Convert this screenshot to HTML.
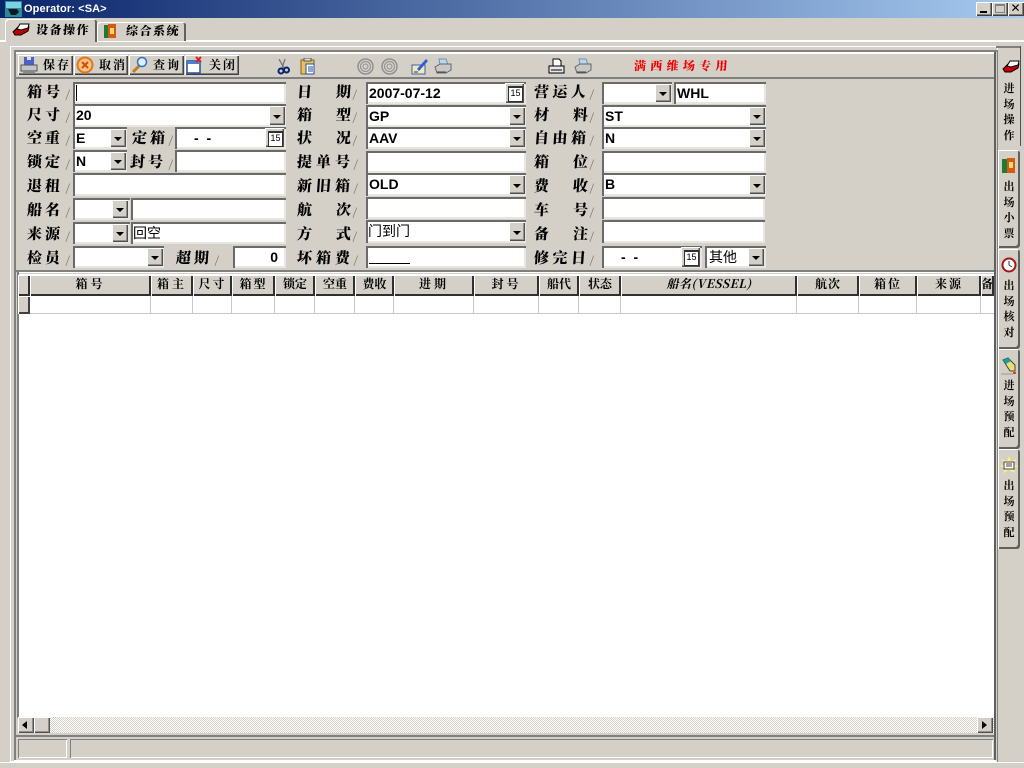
<!DOCTYPE html>
<html><head><meta charset="utf-8"><style>
html,body{margin:0;padding:0;width:1024px;height:768px;overflow:hidden;background:#d4d0c8}
div,span,svg{position:absolute;box-sizing:border-box}
body{font-family:"Liberation Sans","Noto Sans CJK SC",sans-serif;color:#000}
.f{background:#fff;box-shadow:inset 2px 2px 0 #6a6a6a,inset -2px -2px 0 #e8e6e0;font-weight:bold;font-size:14px;line-height:21px;padding:1px 0 0 3px;white-space:nowrap}
.a{width:16px;background:#d4d0c8;box-shadow:inset 1px 1px 0 #fff,inset -1px -1px 0 #505050,inset -2px -2px 0 #909090}
.a:after{content:"";position:absolute;left:4px;top:50%;margin-top:-1px;border:4px solid transparent;border-top:4px solid #000;border-bottom:0}
.c{width:19px;background:#d4d0c8;box-shadow:inset 1px 1px 0 #fff,inset -1px -1px 0 #505050,inset -2px -2px 0 #909090}
.c:after{content:"15";position:absolute;left:3px;top:3px;width:13px;height:13px;border:1px solid #303030;border-top:2px solid #303030;background:#fff;font:9px/10px "Liberation Sans",sans-serif;text-align:center}
.l{font-family:"Noto Serif CJK SC",serif;font-size:15px;line-height:20px;white-space:nowrap;font-weight:900;transform:skewX(-4deg)}
.s{font-size:11px;color:#555;line-height:12px;font-weight:normal}
.h{top:275px;height:21px;background:#d4d0c8;box-shadow:inset 1px 1px 0 #fff,inset -2px -2px 0 #303030;font-family:"Noto Serif CJK SC",serif;font-size:12px;font-weight:700;line-height:18px;text-align:center;white-space:nowrap;overflow:hidden}
.v{top:296px;width:1px;height:18px;background:#c8c8c8}
.b{top:55px;height:20px;background:#d4d0c8;box-shadow:inset 1px 1px 0 #fff,inset -1px -1px 0 #404040,inset -2px -2px 0 #808080;font-family:"Noto Serif CJK SC",serif;font-size:12px;font-weight:700;line-height:19px;white-space:nowrap}
.t{left:998px;width:22px;background:#d4d0c8;box-shadow:inset 1px 1px 0 #fff,inset -2px -2px 0 #606060;border-radius:0 3px 3px 0;font-family:"Noto Serif CJK SC",serif;font-size:11px;font-weight:700;line-height:15.500px;text-align:center}
.w{top:2px;width:16px;height:14px;background:#d4d0c8;box-shadow:inset 1px 1px 0 #fff,inset -1px -1px 0 #404040,inset -2px -2px 0 #808080}
</style></head><body>

<!-- title bar -->
<div style="left:0;top:0;width:1024px;height:18px;background:linear-gradient(90deg,#0a246a 0%,#a6caf0 100%)"></div>
<svg style="left:5px;top:1px" width="17" height="16" viewBox="0 0 17 16"><rect width="17" height="16" fill="#2a8a96"/><rect x="1" y="1" width="15" height="6" fill="#7fd0e0"/><path d="M3 8h9l2 3-3 3H6z" fill="#101820"/></svg>
<div style="left:24px;top:2px;color:#fff;font-size:11px;line-height:14px;font-weight:bold;letter-spacing:.1px">Operator: &lt;SA&gt;</div>
<div class="w" style="left:976px"><span style="left:4px;top:9px;width:7px;height:2px;background:#000"></span></div>
<div class="w" style="left:992px"><span style="left:3px;top:2px;width:10px;height:9px;border:1px solid #808080;border-top:2px solid #808080"></span></div>
<div class="w" style="left:1008px;font-size:12px;line-height:13px;text-align:center;padding-right:1px">✕</div>

<!-- top tabs -->
<div style="left:0;top:40px;width:1024px;height:2px;background:#fff"></div>
<div style="left:5px;top:19px;width:92px;height:23px;background:#d4d0c8;box-shadow:inset 1px 1px 0 #fff,inset -2px 0 0 #606060;border-radius:3px 3px 0 0"></div>
<div style="left:97px;top:22px;width:89px;height:19px;background:#d4d0c8;box-shadow:inset 1px 1px 0 #fff,inset -2px 0 0 #606060;border-radius:3px 3px 0 0"></div>
<svg style="left:12px;top:22px" width="18" height="15" viewBox="0 0 18 15"><path d="M1 10 6 5h11l-1 4-7 4H3z" fill="#c00000" stroke="#000"/><path d="M5 7 8 2h9l-1 4-7 2z" fill="#fff" stroke="#000"/></svg>
<div class="l" style="left:36px;top:20px;font-size:12px;letter-spacing:1.500px">设备操作</div>
<svg style="left:103px;top:23px" width="14" height="16" viewBox="0 0 14 16"><rect x="1" y="2" width="5" height="13" fill="#1f7a35"/><rect x="5" y="1" width="8" height="14" fill="#d85a10"/><rect x="7" y="5" width="4" height="6" fill="#ffd870"/></svg>
<div class="l" style="left:126px;top:21px;font-size:12px;letter-spacing:1.500px">综合系统</div>

<!-- main frame -->
<div style="left:10px;top:46px;width:988px;height:716px;box-shadow:inset 1px 1px 0 #fff,inset -1px -1px 0 #fff"></div>
<div style="left:14px;top:50px;width:2px;height:712px;background:#808080"></div>
<div style="left:14px;top:50px;width:984px;height:2px;background:#808080"></div>
<div style="left:16px;top:52px;width:980px;height:2px;background:#fff"></div>
<div style="left:994px;top:52px;width:2px;height:710px;background:#606060"></div>
<div style="left:14px;top:760px;width:982px;height:2px;background:#fff"></div>
<div style="left:16px;top:77px;width:978px;height:2px;background:#808080"></div>
<div style="left:0;top:762px;width:1024px;height:1px;background:#fff"></div>

<!-- toolbar -->
<div class="b" style="left:18px;width:55px"><span style="left:25px;letter-spacing:2px">保存</span></div>
<div class="b" style="left:74px;width:54px"><span style="left:25px;letter-spacing:2px">取消</span></div>
<div class="b" style="left:129px;width:55px"><span style="left:24px;letter-spacing:2px">查询</span></div>
<div class="b" style="left:185px;width:54px"><span style="left:24px;letter-spacing:2px">关闭</span></div>
<svg style="left:20px;top:56px" width="18" height="18" viewBox="0 0 18 18"><rect x="4" y="1" width="10" height="9" fill="#4a62c8"/><rect x="7" y="1" width="4" height="3" fill="#dde"/><path d="M1 9h16v6H1z" fill="#c0c4cc" stroke="#555"/><rect x="3" y="14" width="12" height="3" fill="#888"/></svg>
<svg style="left:76px;top:56px" width="18" height="18" viewBox="0 0 18 18"><circle cx="9" cy="9" r="7.500" fill="#f6c08a" stroke="#e07818" stroke-width="2"/><path d="M6 6l6 6M12 6l-6 6" stroke="#d05000" stroke-width="2"/></svg>
<svg style="left:131px;top:56px" width="18" height="18" viewBox="0 0 18 18"><path d="M2 16 8 10" stroke="#c87820" stroke-width="3"/><circle cx="11" cy="6" r="4.500" fill="#d8f0ff" stroke="#3070c0" stroke-width="1.500"/></svg>
<svg style="left:186px;top:56px" width="18" height="18" viewBox="0 0 18 18"><rect x="1" y="5" width="13" height="12" fill="#fff" stroke="#2050a0" stroke-width="1.500"/><rect x="1" y="5" width="13" height="3" fill="#4a80d0"/><path d="M10 1l5 5M15 1l-5 5" stroke="#e02020" stroke-width="2"/></svg>
<svg style="left:276px;top:59px" width="14" height="16" viewBox="0 0 14 16"><path d="M3 0l5 9M9 0 6 9" stroke="#777" stroke-width="1.300"/><circle cx="5" cy="12" r="2.500" fill="none" stroke="#0a246a" stroke-width="2"/><circle cx="10.500" cy="11" r="2.500" fill="none" stroke="#0a246a" stroke-width="2"/></svg>
<svg style="left:300px;top:58px" width="16" height="17" viewBox="0 0 16 17"><rect x="1" y="2" width="13" height="14" fill="#e8c060" stroke="#806020"/><rect x="4" y="0" width="7" height="3" fill="#ddd" stroke="#555"/><rect x="6" y="6" width="8" height="10" fill="#fff" stroke="#2050a0"/><path d="M8 9h5M8 11h5M8 13h5" stroke="#2050a0"/></svg>
<svg style="left:357px;top:58px" width="17" height="17" viewBox="0 0 17 17" fill="none" stroke="#909090"><circle cx="8.500" cy="8.500" r="7.500" stroke-width="1.500"/><circle cx="8.500" cy="8.500" r="5"/><circle cx="8.500" cy="8.500" r="2.500"/></svg>
<svg style="left:381px;top:58px" width="17" height="17" viewBox="0 0 17 17" fill="none" stroke="#909090"><circle cx="8.500" cy="8.500" r="7.500" stroke-width="1.500"/><circle cx="8.500" cy="8.500" r="5"/><circle cx="8.500" cy="8.500" r="2.500"/></svg>
<svg style="left:411px;top:57px" width="18" height="18" viewBox="0 0 18 18"><path d="M1 8h13v9H1z" fill="#f0e8c0" stroke="#4060a0"/><path d="M6 12 15 2l2 2-9 10z" fill="#2a60d0"/><path d="M3 15h4" stroke="#333"/></svg>
<svg style="left:434px;top:58px" width="18" height="17" viewBox="0 0 18 17"><path d="M5 1h7l2 6H6z" fill="#b8d8f0" stroke="#7090b0"/><path d="M1 9l5-3h11v6l-5 3H3z" fill="#c8c8c8" stroke="#666"/><path d="M3 14h9" stroke="#444"/></svg>
<svg style="left:548px;top:58px" width="17" height="16" viewBox="0 0 17 16"><path d="M5 1h6l2 2v5H5z" fill="#fff" stroke="#000"/><path d="M1 8h15v7H1z" fill="#e8e8e8" stroke="#000"/><path d="M3 12h11" stroke="#000"/></svg>
<svg style="left:574px;top:58px" width="18" height="17" viewBox="0 0 18 17"><path d="M5 1h7l2 6H6z" fill="#b8d8f0" stroke="#7090b0"/><path d="M1 9l5-3h11v6l-5 3H3z" fill="#c8c8c8" stroke="#666"/><path d="M3 14h9" stroke="#444"/></svg>
<div class="l" style="left:634px;top:56px;font-size:12px;letter-spacing:4.300px;color:#f00000">满西维场专用</div>

<!-- column 1 -->
<div class="l" style="left:27px;top:82px;letter-spacing:3px">箱号<span class="s" style="left:39px;top:6px">/</span></div>
<div class="f" style="left:73px;top:82px;width:213px;height:22px"><span style="left:3px;top:3px;width:1px;height:16px;background:#000"></span></div>
<div class="l" style="left:27px;top:105px;letter-spacing:3px">尺寸<span class="s" style="left:39px;top:6px">/</span></div>
<div class="f" style="left:73px;top:104px;width:213px;height:23px">20<div class="a" style="left:196px;top:2px;height:19px"></div></div>
<div class="l" style="left:27px;top:128px;letter-spacing:3px">空重<span class="s" style="left:39px;top:6px">/</span></div>
<div class="f" style="left:73px;top:127px;width:54px;height:22px">E<div class="a" style="left:37px;top:2px;height:18px"></div></div>
<div class="l" style="left:132px;top:128px;letter-spacing:3px">定箱<span class="s" style="left:37px;top:6px">/</span></div>
<div class="f" style="left:175px;top:127px;width:111px;height:22px;padding-left:19px">- &nbsp;-<div class="c" style="left:90px;top:1px;height:19px"></div></div>
<div class="l" style="left:27px;top:152px;letter-spacing:3px">锁定<span class="s" style="left:39px;top:6px">/</span></div>
<div class="f" style="left:73px;top:150px;width:54px;height:22px">N<div class="a" style="left:37px;top:2px;height:18px"></div></div>
<div class="l" style="left:130px;top:152px;letter-spacing:3px">封号<span class="s" style="left:39px;top:6px">/</span></div>
<div class="f" style="left:175px;top:150px;width:111px;height:22px"></div>
<div class="l" style="left:27px;top:176px;letter-spacing:3px">退租<span class="s" style="left:39px;top:6px">/</span></div>
<div class="f" style="left:73px;top:173px;width:213px;height:23px"></div>
<div class="l" style="left:27px;top:200px;letter-spacing:3px">船名<span class="s" style="left:39px;top:6px">/</span></div>
<div class="f" style="left:73px;top:198px;width:57px;height:22px"><div class="a" style="left:39px;top:2px;height:18px"></div></div>
<div class="f" style="left:131px;top:198px;width:155px;height:22px"></div>
<div class="l" style="left:27px;top:224px;letter-spacing:3px">来源<span class="s" style="left:39px;top:6px">/</span></div>
<div class="f" style="left:73px;top:222px;width:57px;height:22px"><div class="a" style="left:39px;top:2px;height:18px"></div></div>
<div class="f" style="left:131px;top:222px;width:155px;height:22px;font-weight:normal;font-size:14px;padding-left:2px">回空</div>
<div class="l" style="left:27px;top:248px;letter-spacing:3px">检员<span class="s" style="left:39px;top:6px">/</span></div>
<div class="f" style="left:73px;top:246px;width:91px;height:22px"><div class="a" style="left:74px;top:2px;height:18px"></div></div>
<div class="l" style="left:176px;top:248px;letter-spacing:3px">超期<span class="s" style="left:39px;top:6px">/</span></div>
<div class="f" style="left:233px;top:246px;width:53px;height:22px;text-align:right;padding-right:8px">0</div>

<!-- column 2 -->
<div class="l" style="left:297px;top:82px">日<span style="left:39px;top:0">期</span><span class="s" style="left:56px;top:6px">/</span></div>
<div class="f" style="left:366px;top:82px;width:160px;height:22px">2007-07-12<div class="c" style="left:139px;top:1px;height:20px"></div></div>
<div class="l" style="left:297px;top:105px">箱<span style="left:39px;top:0">型</span><span class="s" style="left:56px;top:6px">/</span></div>
<div class="f" style="left:366px;top:105px;width:160px;height:22px">GP<div class="a" style="left:143px;top:2px;height:18px"></div></div>
<div class="l" style="left:297px;top:128px">状<span style="left:39px;top:0">况</span><span class="s" style="left:56px;top:6px">/</span></div>
<div class="f" style="left:366px;top:127px;width:160px;height:22px">AAV<div class="a" style="left:143px;top:2px;height:18px"></div></div>
<div class="l" style="left:297px;top:152px;letter-spacing:4px">提单号<span class="s" style="left:57px;top:6px">/</span></div>
<div class="f" style="left:366px;top:151px;width:160px;height:22px"></div>
<div class="l" style="left:297px;top:176px;letter-spacing:4px">新旧箱<span class="s" style="left:57px;top:6px">/</span></div>
<div class="f" style="left:366px;top:173px;width:160px;height:23px">OLD<div class="a" style="left:143px;top:2px;height:19px"></div></div>
<div class="l" style="left:297px;top:200px">航<span style="left:39px;top:0">次</span><span class="s" style="left:56px;top:6px">/</span></div>
<div class="f" style="left:366px;top:197px;width:160px;height:22px"></div>
<div class="l" style="left:297px;top:224px">方<span style="left:39px;top:0">式</span><span class="s" style="left:56px;top:6px">/</span></div>
<div class="f" style="left:366px;top:220px;width:160px;height:23px;font-weight:normal;font-size:14px;padding-left:2px">门到门<div class="a" style="left:143px;top:2px;height:19px"></div></div>
<div class="l" style="left:297px;top:248px;letter-spacing:4px">坏箱费<span class="s" style="left:57px;top:6px">/</span></div>
<div class="f" style="left:366px;top:246px;width:160px;height:22px"><span style="left:3px;top:17px;width:41px;height:1px;background:#000"></span></div>

<!-- column 3 -->
<div class="l" style="left:534px;top:82px;letter-spacing:3.500px">营运人<span class="s" style="left:56px;top:6px">/</span></div>
<div class="f" style="left:602px;top:82px;width:70px;height:22px"><div class="a" style="left:53px;top:2px;height:18px"></div></div>
<div class="f" style="left:674px;top:82px;width:92px;height:22px">WHL</div>
<div class="l" style="left:534px;top:105px">材<span style="left:39px;top:0">料</span><span class="s" style="left:56px;top:6px">/</span></div>
<div class="f" style="left:602px;top:105px;width:164px;height:22px">ST<div class="a" style="left:147px;top:2px;height:18px"></div></div>
<div class="l" style="left:534px;top:128px;letter-spacing:3.500px">自由箱<span class="s" style="left:56px;top:6px">/</span></div>
<div class="f" style="left:602px;top:127px;width:164px;height:22px">N<div class="a" style="left:147px;top:2px;height:18px"></div></div>
<div class="l" style="left:534px;top:152px">箱<span style="left:39px;top:0">位</span><span class="s" style="left:56px;top:6px">/</span></div>
<div class="f" style="left:602px;top:151px;width:164px;height:22px"></div>
<div class="l" style="left:534px;top:176px">费<span style="left:39px;top:0">收</span><span class="s" style="left:56px;top:6px">/</span></div>
<div class="f" style="left:602px;top:173px;width:164px;height:23px">B<div class="a" style="left:147px;top:2px;height:19px"></div></div>
<div class="l" style="left:534px;top:200px">车<span style="left:39px;top:0">号</span><span class="s" style="left:56px;top:6px">/</span></div>
<div class="f" style="left:602px;top:197px;width:163px;height:22px"></div>
<div class="l" style="left:534px;top:224px">备<span style="left:39px;top:0">注</span><span class="s" style="left:56px;top:6px">/</span></div>
<div class="f" style="left:602px;top:220px;width:163px;height:23px"></div>
<div class="l" style="left:534px;top:248px;letter-spacing:3.500px">修完日<span class="s" style="left:56px;top:6px">/</span></div>
<div class="f" style="left:602px;top:246px;width:100px;height:22px;padding-left:19px">- &nbsp;-<div class="c" style="left:79px;top:1px;height:20px"></div></div>
<div class="f" style="left:705px;top:246px;width:61px;height:22px;font-weight:normal;font-size:14px;padding-left:4px">其他<div class="a" style="left:43px;top:2px;height:18px"></div></div>

<!-- table -->
<div style="left:16px;top:270px;width:978px;height:2px;background:#808080"></div>
<div style="left:17px;top:274px;width:977px;height:443px;background:#fff"></div>
<div style="left:17px;top:272px;width:2px;height:446px;background:#808080"></div>
<div style="left:19px;top:272px;width:975px;height:2px;background:#d4d0c8;border-top:1px solid #fff"></div>
<div class="h" style="left:18px;width:12px"></div>
<div class="h" style="left:30px;width:121px;letter-spacing:3px">箱号</div>
<div class="h" style="left:151px;width:42px;letter-spacing:3px">箱主</div>
<div class="h" style="left:193px;width:39px;letter-spacing:2px">尺寸</div>
<div class="h" style="left:232px;width:43px;letter-spacing:2px">箱型</div>
<div class="h" style="left:275px;width:40px">锁定</div>
<div class="h" style="left:315px;width:40px">空重</div>
<div class="h" style="left:355px;width:39px">费收</div>
<div class="h" style="left:394px;width:80px;letter-spacing:3px">进期</div>
<div class="h" style="left:474px;width:65px;letter-spacing:3px">封号</div>
<div class="h" style="left:539px;width:40px">船代</div>
<div class="h" style="left:579px;width:42px">状态</div>
<div class="h" style="left:621px;width:176px;letter-spacing:.5px"><i>船名(VESSEL)</i></div>
<div class="h" style="left:797px;width:62px;letter-spacing:1px">航次</div>
<div class="h" style="left:859px;width:58px;letter-spacing:2px">箱位</div>
<div class="h" style="left:917px;width:64px;letter-spacing:2px">来源</div>
<div class="h" style="left:981px;width:13px;text-align:left">备</div>
<div style="left:18px;top:296px;width:12px;height:18px;background:#d4d0c8;box-shadow:inset 1px 1px 0 #fff,inset -2px -2px 0 #404040"></div>
<div style="left:30px;top:313px;width:964px;height:1px;background:#c8c8c8"></div>
<div class="v" style="left:150px"></div><div class="v" style="left:192px"></div><div class="v" style="left:231px"></div><div class="v" style="left:274px"></div><div class="v" style="left:314px"></div><div class="v" style="left:354px"></div><div class="v" style="left:393px"></div><div class="v" style="left:473px"></div><div class="v" style="left:538px"></div><div class="v" style="left:578px"></div><div class="v" style="left:620px"></div><div class="v" style="left:796px"></div><div class="v" style="left:858px"></div><div class="v" style="left:916px"></div><div class="v" style="left:980px"></div>

<!-- h scrollbar -->
<div style="left:18px;top:717px;width:976px;height:16px;background:repeating-conic-gradient(#d4d0c8 0 25%,#fff 0 50%) 0 0/2px 2px"></div>
<div class="a" style="left:18px;top:717px;width:16px;height:16px"></div>
<div style="left:22px;top:721px;border:4px solid transparent;border-right:5px solid #000;border-left:0"></div>
<div class="a" style="left:34px;top:717px;width:16px;height:16px"></div>
<div class="a" style="left:977px;top:717px;width:16px;height:16px"></div>
<div style="left:982px;top:721px;border:4px solid transparent;border-left:5px solid #000;border-right:0"></div>
<style>.a[style*="top:717px"]:after{display:none}</style>

<!-- status -->
<div style="left:16px;top:735px;width:978px;height:2px;background:#808080"></div>
<div style="left:18px;top:739px;width:49px;height:19px;box-shadow:inset 1px 1px 0 #808080,inset -1px -1px 0 #fff"></div>
<div style="left:70px;top:739px;width:923px;height:19px;box-shadow:inset 1px 1px 0 #808080,inset -1px -1px 0 #fff"></div>

<!-- right tabs -->
<div style="left:997px;top:50px;width:1px;height:712px;background:#808080"></div>
<div style="left:996px;top:46px;width:24px;height:2px;background:#808080"></div>
<div style="left:1020px;top:46px;width:1px;height:100px;background:#505050"></div>
<svg style="left:1002px;top:59px" width="18" height="15" viewBox="0 0 18 15"><path d="M1 10 6 5h11l-1 4-7 4H3z" fill="#c00000" stroke="#000"/><path d="M5 7 8 2h9l-1 4-7 2z" fill="#fff" stroke="#000"/></svg>
<div class="t" style="top:81px;height:60px;background:none;box-shadow:none">进<br>场<br>操<br>作</div>
<div class="t" style="top:150px;height:98px;padding-top:29px">出<br>场<br>小<br>票</div>
<svg style="left:1001px;top:157px" width="15" height="17" viewBox="0 0 15 17"><rect x="1" y="2" width="6" height="14" fill="#1f7a35"/><rect x="6" y="1" width="8" height="15" fill="#d85a10"/><rect x="8" y="5" width="4" height="6" fill="#ffd870"/></svg>
<div class="t" style="top:249px;height:100px;padding-top:29px">出<br>场<br>核<br>对</div>
<svg style="left:1001px;top:257px" width="16" height="16" viewBox="0 0 16 16"><circle cx="8" cy="8" r="6.500" fill="#fff" stroke="#a01818" stroke-width="2"/><path d="M8 8 8 4M8 8l3 2" stroke="#333"/></svg>
<div class="t" style="top:349px;height:100px;padding-top:29px">进<br>场<br>预<br>配</div>
<svg style="left:1001px;top:357px" width="16" height="18" viewBox="0 0 16 18"><path d="M2 3l5-2 7 7v6H9z" fill="#e8e070" stroke="#444"/><path d="M2 3l5-2 3 3-5 3z" fill="#18a0a0"/><path d="M0 17h12" stroke="#999"/><rect x="12" y="15" width="3" height="2" fill="#e04020"/></svg>
<div class="t" style="top:449px;height:100px;padding-top:29px">出<br>场<br>预<br>配</div>
<svg style="left:1000px;top:456px" width="18" height="18" viewBox="0 0 18 18"><path d="M9 0 11 5 17 3 13 8 18 10 13 12 15 17 9 14 3 17 5 12 0 10 5 8 1 3 7 5z" fill="#fff080"/><rect x="4" y="6" width="10" height="7" fill="#fff" stroke="#444"/><path d="M6 8h6M6 10h6" stroke="#444"/></svg>

</body></html>
